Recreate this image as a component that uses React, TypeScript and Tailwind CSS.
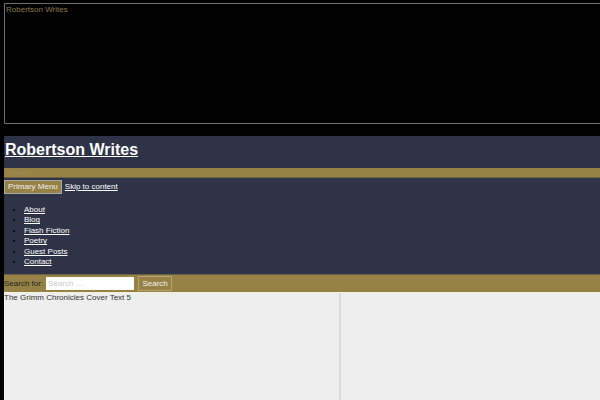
const menu = ['About', 'Blog', 'Flash Fiction', 'Poetry', 'Guest Posts', 'Contact']

export default function App() {
  return (
    <div
      className="w-[600px] h-[400px] overflow-hidden bg-black pl-[4px] flex flex-col"
      style={{ fontFamily: "'Liberation Sans', Arial, sans-serif" }}
    >
      {/* embedded frame */}
      <div className="mt-[3px] h-[121px] w-[610px] shrink-0 border border-[#6e6e6e] px-[1px] text-[8px] leading-[11px] text-[#8c7b4c]">
        Robertson Writes
      </div>

      <div className="h-[12px] shrink-0" />

      {/* site header */}
      <header className="bg-[#2e3347] shrink-0">
        <div className="h-[32px] pt-[2px] pl-[1px]">
          <a href="#" className="text-[16px] leading-[20px] font-bold text-white underline">
            Robertson Writes
          </a>
        </div>
        <div className="h-[10px] bg-[#978246] border-b border-[#6b6048] text-[8px] leading-[10px] pl-[2px] text-[#a08d55]">
          Search
        </div>
        <nav className="h-[96px] pt-[2px]">
          <div className="flex items-center gap-[3px]">
            <button className="h-[14px] px-[3px] bg-[#978246] border border-[#a8a8a8] text-[#eeeeee] text-[8px] leading-[12px]">
              Primary Menu
            </button>
            <a href="#" className="text-[8px] leading-[12px] text-white underline">
              Skip to content
            </a>
          </div>
          <ul className="list-disc pl-[20px] mt-[11px] text-[8px] leading-[10.4px] marker:text-black">
            {menu.map((m) => (
              <li key={m}>
                <a href="#" className="text-white underline">{m}</a>
              </li>
            ))}
          </ul>
        </nav>
        <div className="h-[18px] bg-[#978246] border-t border-[#6b6048] flex items-center gap-[3px] text-[8px]">
          <span className="text-[#222]">Search for:</span>
          <input
            placeholder="Search …"
            className="w-[88px] h-[13px] bg-white px-[2px] text-[8px] placeholder:text-[#c8c8c8] outline-none"
          />
          <button className="ml-[1px] h-[15px] w-[34px] bg-[#978246] border border-[#b5a574] text-[#f2f2f2] text-[8px]">
            Search
          </button>
        </div>
      </header>

      {/* content */}
      <main className="flex-1 bg-[#eeeeee] grid grid-cols-[335px_2px_1fr] border-t border-[#f6f2e0]">
        <div className="text-[8px] leading-[10px] text-[#333]">
          The Grimm Chronicles Cover Text 5
        </div>
        <div className="bg-[#dcdcdc]" />
        <div />
      </main>
    </div>
  )
}
